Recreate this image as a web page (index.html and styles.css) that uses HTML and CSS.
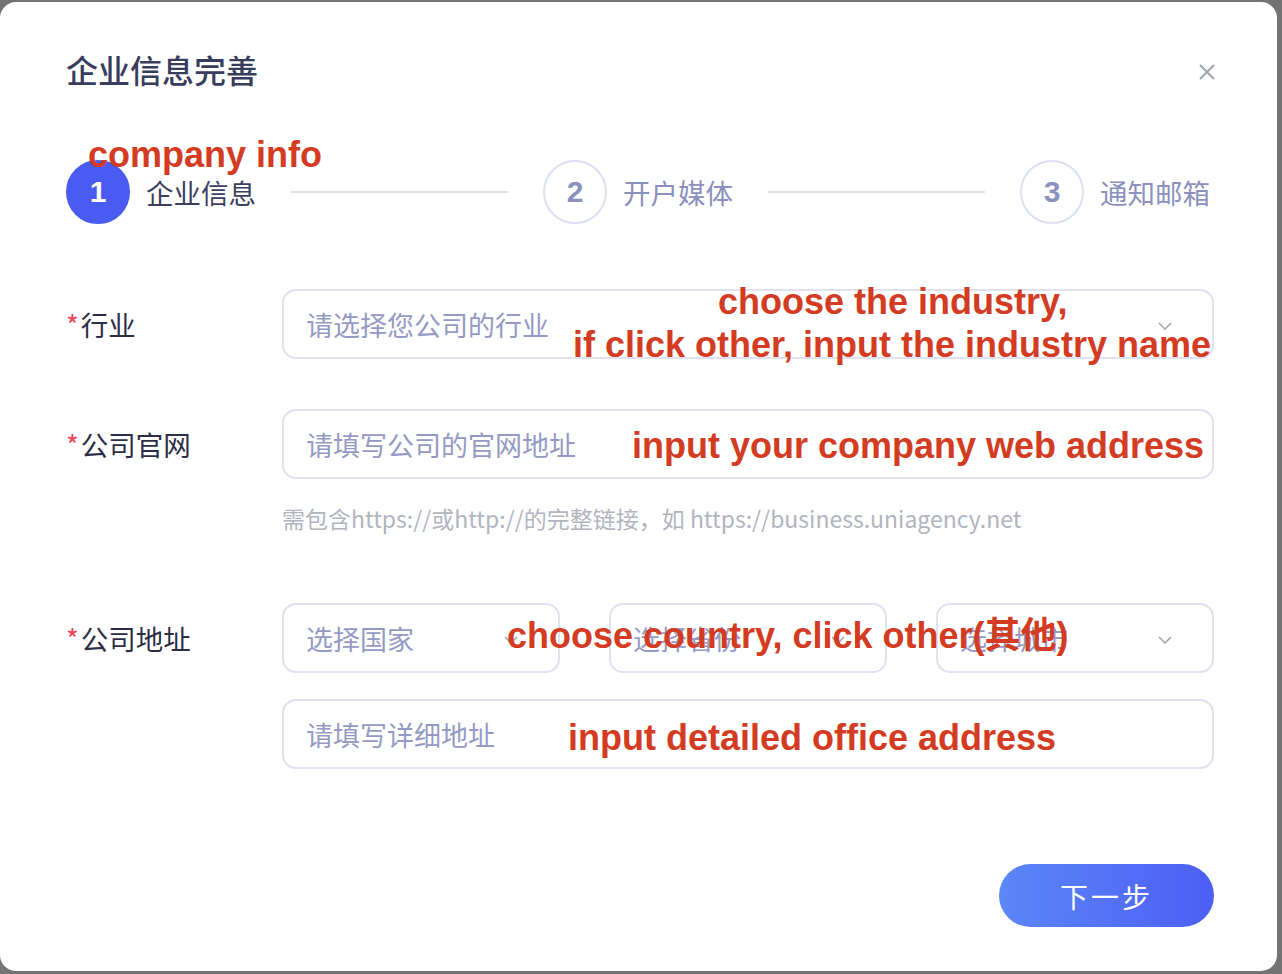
FILE: index.html
```
<!DOCTYPE html>
<html>
<head>
<meta charset="utf-8">
<link rel="stylesheet" href="styles.css">
</head>
<body>
<div class="dialog">
  <div class="header">
    <h2 class="title">企业信息完善</h2>
    <span class="close">
      <svg width="18" height="18" viewBox="0 0 18 18"><path d="M2 2 L16 16 M16 2 L2 16" stroke="#a0a4ae" stroke-width="2" fill="none"/></svg>
    </span>
  </div>

  <div class="steps">
    <div class="step active"><span class="num">1</span><span class="step-name">企业信息</span></div>
    <div class="line"></div>
    <div class="step"><span class="num">2</span><span class="step-name">开户媒体</span></div>
    <div class="line"></div>
    <div class="step"><span class="num">3</span><span class="step-name">通知邮箱</span></div>
  </div>

  <div class="form">
    <div class="row">
      <div class="label"><span class="req">*</span>行业</div>
      <div class="field select">请选择您公司的行业
        <svg class="arrow" width="14" height="8" viewBox="0 0 14 8"><polyline points="1,1 7,7 13,1" stroke="#a3a7b3" stroke-width="1.6" fill="none"/></svg>
      </div>
    </div>

    <div class="row">
      <div class="label"><span class="req">*</span>公司官网</div>
      <div class="field">请填写公司的官网地址</div>
    </div>
    <p class="hint">需包含https://或http://的完整链接，如 https://business.uniagency.net</p>

    <div class="row addr">
      <div class="label"><span class="req">*</span>公司地址</div>
      <div class="addr-box">
        <div class="selects">
          <div class="field select">选择国家
            <svg class="arrow" width="14" height="8" viewBox="0 0 14 8"><polyline points="1,1 7,7 13,1" stroke="#a3a7b3" stroke-width="1.6" fill="none"/></svg>
          </div>
          <div class="field select">选择省份
            <svg class="arrow" width="14" height="8" viewBox="0 0 14 8"><polyline points="1,1 7,7 13,1" stroke="#a3a7b3" stroke-width="1.6" fill="none"/></svg>
          </div>
          <div class="field select">选择城市
            <svg class="arrow" width="14" height="8" viewBox="0 0 14 8"><polyline points="1,1 7,7 13,1" stroke="#a3a7b3" stroke-width="1.6" fill="none"/></svg>
          </div>
        </div>
        <div class="field detail">请填写详细地址</div>
      </div>
    </div>
  </div>

  <div class="footer">
    <button class="next">下一步</button>
  </div>

  <div class="note n1">company info</div>
  <div class="note n2">choose the industry,</div>
  <div class="note n3">if click other, input the industry name</div>
  <div class="note n4">input your company web address</div>
  <div class="note n5">choose country, click other(其他)</div>
  <div class="note n6">input detailed office address</div>
</div>
</body>
</html>
```

FILE: styles.css
```
body{
	margin: 0;
	background-color: #737373;
	font-family: "Noto Sans CJK SC", "Noto Sans", sans-serif;
}
.dialog{
	position: relative;
	box-sizing: border-box;
	width: 1277px;
	height: 969px;
	margin-top: 2px;
	padding: 47px 63px 0 66px;
	background-color: #fff;
	border-radius: 16px;
	overflow: hidden;
}
.header{
	display: flex;
	justify-content: space-between;
	align-items: center;
	height: 40px;
}
.title{
	margin: 0;
	font-size: 32px;
	line-height: 40px;
	font-weight: 500;
	color: #383d5e;
}
.close{
	display: flex;
	margin-right: -2px;
	margin-top: 6px;
}

.steps{
	display: flex;
	align-items: center;
	margin-top: 71px;
	padding-right: 4px;
	height: 64px;
}
.step{
	display: flex;
	align-items: center;
}
.num{
	box-sizing: border-box;
	width: 64px;
	height: 64px;
	border-radius: 50%;
	border: 2px solid #dde0f2;
	display: flex;
	align-items: center;
	justify-content: center;
	font-family: "Liberation Sans", sans-serif;
	font-weight: bold;
	font-size: 30px;
	color: #8b90bd;
}
.step-name{
	margin-left: 16px;
	font-size: 27.5px;
	color: #8b90bd;
}
.step.active .num{
	background-color: #4a5bf1;
	border-color: #4a5bf1;
	color: #fff;
}
.step.active .step-name{
	color: #3b3f5e;
}
.line{
	flex: 1;
	height: 2px;
	margin: 0 35px;
	background-color: #dfe1e7;
}

.form{
	margin-top: 65px;
}
.row{
	display: flex;
	align-items: center;
	margin-bottom: 50px;
}
.label{
	width: 216px;
	flex-shrink: 0;
	font-size: 27.5px;
	color: #2c2e45;
}
.req{
	color: #f2405a;
	margin-right: 2px;
}
.field{
	position: relative;
	box-sizing: border-box;
	flex: 1;
	height: 70px;
	padding-left: 22px;
	display: flex;
	align-items: center;
	border: 2px solid #dfe2f1;
	border-radius: 14px;
	font-size: 27px;
	color: #959ac4;
}
.field.detail{
	flex: none;
}
.arrow{
	position: absolute;
	right: 40px;
	top: 31px;
}
.hint{
	margin: -28px 0 0 216px;
	font-size: 23px;
	line-height: 34px;
	color: #b2b5bf;
}
.row.addr{
	margin-top: 68px;
	margin-bottom: 0;
	align-items: flex-start;
}
.row.addr .label{
	line-height: 70px;
}
.addr-box{
	flex: 1;
	display: flex;
	flex-direction: column;
	gap: 26px;
}
.selects{
	display: flex;
	gap: 49px;
}
.selects .field{
	flex: 1;
}

.footer{
	display: flex;
	justify-content: flex-end;
	margin-top: 95px;
}
.next{
	width: 215px;
	height: 63px;
	border: none;
	border-radius: 32px;
	background: linear-gradient(90deg, #5b87f7, #4d5ef5);
	color: #fff;
	font-family: "Noto Sans CJK SC", sans-serif;
	font-size: 28px;
	letter-spacing: 3px;
}

.note{
	position: absolute;
	font-family: "Liberation Sans", "Noto Sans CJK SC", sans-serif;
	font-weight: bold;
	font-size: 36px;
	line-height: 36px;
	color: #d33b22;
	white-space: nowrap;
}
.n1{ left: 88px; top: 135px; }
.n2{ left: 718px; top: 282px; }
.n3{ left: 573px; top: 325px; }
.n4{ left: 632px; top: 426px; }
.n5{ left: 507px; top: 616px; }
.n6{ left: 568px; top: 718px; }
```
